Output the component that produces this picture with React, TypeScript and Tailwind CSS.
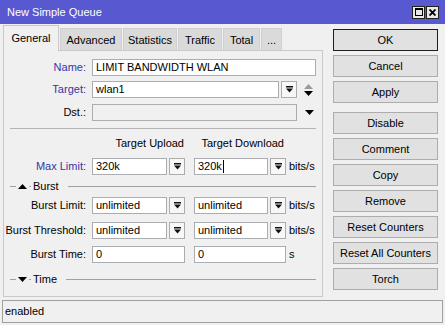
import React from "react";

const FONT = "font-['Liberation_Sans',Arial,sans-serif]";

function DropIcon() {
  return (
    <svg width="7" height="7" viewBox="0 0 7 7">
      <rect x="0" y="0" width="7" height="1.5" fill="#111" />
      <polygon points="0,2.5 7,2.5 3.5,6.5" fill="#111" />
    </svg>
  );
}

function DropBtn() {
  return (
    <div className="ml-[2px] flex h-[17px] w-[16px] items-center justify-center border border-[#adadad] bg-[#f7f7f7]">
      <DropIcon />
    </div>
  );
}

function Field({
  className,
  value,
  disabled,
  caret,
}: {
  className: string;
  value?: string;
  disabled?: boolean;
  caret?: boolean;
}) {
  return (
    <div
      className={`flex h-[17px] items-center border border-[#abadb3] pl-[3px] ${
        disabled ? "bg-[#f0f0f0]" : "bg-white"
      } ${className}`}
    >
      <span className="leading-none">{value}</span>
      {caret && <span className="ml-[1px] h-[13px] w-px bg-black" />}
    </div>
  );
}

function Label({ text, blue }: { text: string; blue?: boolean }) {
  return (
    <div
      className={`w-[85px] shrink-0 pr-[3px] text-right ${
        blue ? "text-[#3535a8]" : "text-black"
      }`}
    >
      {text}
    </div>
  );
}

function Section({ title, up }: { title: string; up: boolean }) {
  return (
    <div className="flex h-[13px] items-center pl-[6px] pr-[6px]">
      <div className="w-[6px] border-t border-[#a0a0a0]" />
      <svg width="9" height="5" viewBox="0 0 9 5" className="ml-[2px]">
        {up ? (
          <polygon points="0,5 9,5 4.5,0" fill="#000" />
        ) : (
          <polygon points="0,0 9,0 4.5,5" fill="#000" />
        )}
      </svg>
      <div className="ml-[2px] w-[2px] border-t border-[#a0a0a0]" />
      <span className="ml-[2px]">{title}</span>
      <div className="ml-[9px] flex-1 border-t border-[#a0a0a0]" />
    </div>
  );
}

function Btn({ text, primary, className = "" }: { text: string; primary?: boolean; className?: string }) {
  return (
    <div
      className={`flex h-[22px] w-[105px] items-center justify-center border bg-[#e1e1e1] ${
        primary ? "border-[#1e1e1e]" : "border-[#adadad]"
      } ${className}`}
    >
      {text}
    </div>
  );
}

const TABS: { label: string; w: string }[] = [
  { label: "Advanced", w: "w-[62px]" },
  { label: "Statistics", w: "w-[54px]" },
  { label: "Traffic", w: "w-[44px]" },
  { label: "Total", w: "w-[37px]" },
  { label: "...", w: "w-[21px]" },
];

export default function App() {
  return (
    <div className={`${FONT} h-[325px] w-[445px] overflow-hidden bg-[#f0f0f0] text-[11px] text-black`}>
      {/* title bar */}
      <div className="flex h-[24px] items-center justify-between bg-[#5858d0] pl-[7px] pr-[6px]">
        <span className="text-[11px] text-white">New Simple Queue</span>
        <div className="flex gap-[1px]">
          <div className="flex h-[13px] w-[13px] items-center justify-center border border-[#222] bg-[#e8e8e8]">
            <div className="h-[8px] w-[8px] border border-t-2 border-black" />
          </div>
          <div className="flex h-[13px] w-[13px] items-center justify-center border border-[#222] bg-[#e8e8e8]">
            <svg width="7" height="7" viewBox="0 0 7 7">
              <path d="M0.5 0.5 L6.5 6.5 M6.5 0.5 L0.5 6.5" stroke="#000" strokeWidth="1.8" />
            </svg>
          </div>
        </div>
      </div>

      <div className="flex">
        {/* left side: tabs + panel */}
        <div className="ml-[3px] w-[320px]">
          <div className="mt-[1px] flex h-[25px] items-end">
            <div className="relative z-10 -mb-px flex h-[26px] w-[56px] items-center justify-center border border-b-0 border-[#c9c9c9] bg-[#f0f0f0]">
              General
            </div>
            {TABS.map((t) => (
              <div
                key={t.label}
                className={`ml-[1px] flex h-[22px] items-center justify-center border border-b-0 border-[#d0d0d0] bg-[#dadada] pt-px ${t.w}`}
              >
                {t.label}
              </div>
            ))}
          </div>
          <div className="flex h-[247px] flex-col border border-[#c9c9c9]">
            <div className="mt-[8px] flex items-center">
              <Label text="Name:" blue />
              <Field className="ml-[3px] w-[224px]" value="LIMIT BANDWIDTH WLAN" />
            </div>
            <div className="mt-[5px] flex items-center">
              <Label text="Target:" blue />
              <Field className="ml-[3px] w-[187px]" value="wlan1" />
              <DropBtn />
              <svg width="9" height="12" viewBox="0 0 9 12" className="ml-[7px]">
                <polygon points="0,5 9,5 4.5,0" fill="#9a9a9a" />
                <polygon points="0,7 9,7 4.5,12" fill="#000" />
              </svg>
            </div>
            <div className="mt-[6px] flex items-center">
              <Label text="Dst.:" />
              <Field className="ml-[3px] w-[205px]" disabled />
              <svg width="9" height="5" viewBox="0 0 9 5" className="ml-[8px]">
                <polygon points="0,0 9,0 4.5,5" fill="#000" />
              </svg>
            </div>
            <div className="mx-[6px] mt-[7px] border-t border-[#b4b4b4]" />
            <div className="mt-[8px] flex h-[13px] items-center">
              <div className="w-[180px] text-right">Target Upload</div>
              <div className="ml-[10px] w-[90px] text-right">Target Download</div>
            </div>
            <div className="mt-[8px] flex items-center">
              <Label text="Max Limit:" blue />
              <Field className="ml-[3px] w-[75px]" value="320k" />
              <DropBtn />
              <Field className="ml-[9px] w-[74px]" value="320k" caret />
              <DropBtn />
              <span className="ml-[3px]">bits/s</span>
            </div>
            <div className="mt-[5px]">
              <Section title="Burst" up />
            </div>
            <div className="mt-[4px] flex items-center">
              <Label text="Burst Limit:" />
              <Field className="ml-[3px] w-[75px]" value="unlimited" />
              <DropBtn />
              <Field className="ml-[9px] w-[74px]" value="unlimited" />
              <DropBtn />
              <span className="ml-[3px]">bits/s</span>
            </div>
            <div className="mt-[8px] flex items-center">
              <Label text="Burst Threshold:" />
              <Field className="ml-[3px] w-[75px]" value="unlimited" />
              <DropBtn />
              <Field className="ml-[9px] w-[74px]" value="unlimited" />
              <DropBtn />
              <span className="ml-[3px]">bits/s</span>
            </div>
            <div className="mt-[7px] flex items-center">
              <Label text="Burst Time:" />
              <Field className="ml-[3px] w-[93px]" value="0" />
              <Field className="ml-[9px] w-[92px]" value="0" />
              <span className="ml-[3px]">s</span>
            </div>
            <div className="mt-[10px]">
              <Section title="Time" up={false} />
            </div>
          </div>
        </div>

        {/* right side: buttons */}
        <div className="ml-[10px] mt-[5px] flex flex-col gap-[4px]">
          <Btn text="OK" primary />
          <Btn text="Cancel" />
          <Btn text="Apply" />
          <Btn text="Disable" className="mt-[5px]" />
          <Btn text="Comment" />
          <Btn text="Copy" />
          <Btn text="Remove" />
          <Btn text="Reset Counters" />
          <Btn text="Reset All Counters" />
          <Btn text="Torch" />
        </div>
      </div>

      {/* status bar */}
      <div className="mx-[2px] mt-[3px] flex h-[23px] items-center border border-[#a0a0a0] pl-[2px]">
        enabled
      </div>
    </div>
  );
}
